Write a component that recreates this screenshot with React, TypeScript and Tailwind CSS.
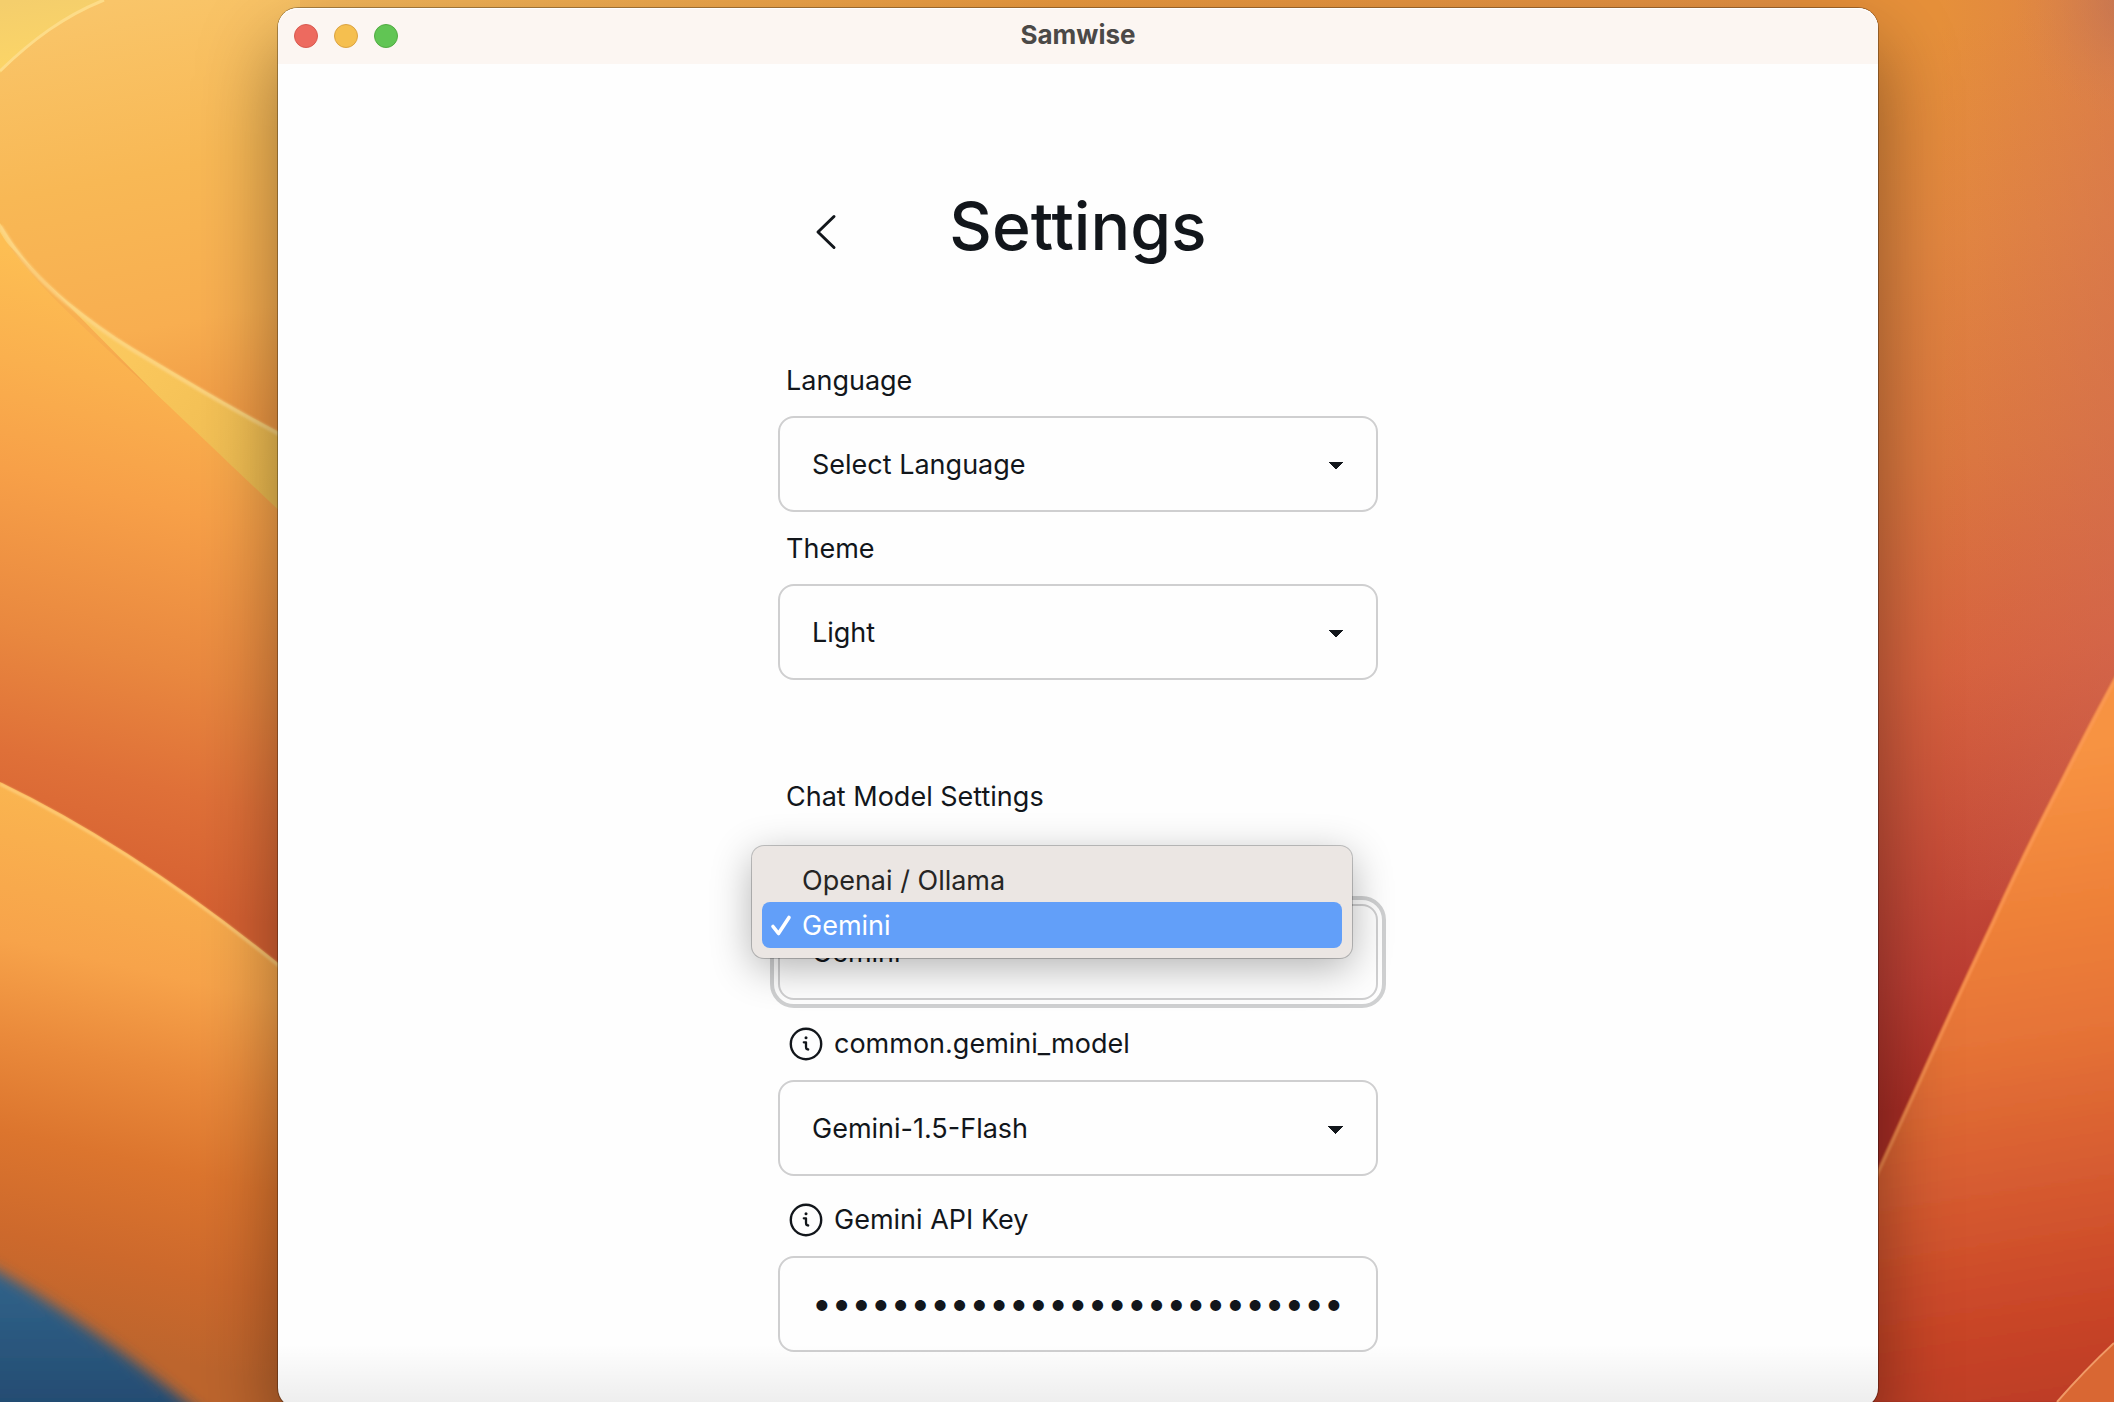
import React from "react";

function Wallpaper() {
  return (
    <svg
      className="absolute inset-0 h-full w-full"
      viewBox="0 0 2114 1402"
      preserveAspectRatio="none"
      aria-hidden="true"
    >
      <defs>
        <linearGradient id="base" gradientUnits="userSpaceOnUse" x1="0" y1="0" x2="2114" y2="0">
          <stop offset="0" stopColor="#f9c468" />
          <stop offset="0.5" stopColor="#e9993f" />
          <stop offset="1" stopColor="#e08c45" />
        </linearGradient>
        <linearGradient id="corner" gradientUnits="userSpaceOnUse" x1="20" y1="0" x2="30" y2="60">
          <stop offset="0" stopColor="#f4ce6c" />
          <stop offset="1" stopColor="#fbd467" />
        </linearGradient>
        <linearGradient id="upper" gradientUnits="userSpaceOnUse" x1="120" y1="0" x2="200" y2="430">
          <stop offset="0" stopColor="#f9c569" />
          <stop offset="0.4" stopColor="#f8b855" />
          <stop offset="0.75" stopColor="#f8ae50" />
          <stop offset="1" stopColor="#ef9944" />
        </linearGradient>
        <linearGradient id="sliver" gradientUnits="userSpaceOnUse" x1="0" y1="230" x2="278" y2="480">
          <stop offset="0" stopColor="#fbcf70" />
          <stop offset="0.5" stopColor="#fac75c" />
          <stop offset="1" stopColor="#eebb50" />
        </linearGradient>
        <linearGradient id="middle" gradientUnits="userSpaceOnUse" x1="100" y1="270" x2="-40" y2="850">
          <stop offset="0" stopColor="#fdbe53" />
          <stop offset="0.18" stopColor="#fab04e" />
          <stop offset="0.36" stopColor="#f7a048" />
          <stop offset="0.62" stopColor="#e9883f" />
          <stop offset="0.82" stopColor="#df7038" />
          <stop offset="1" stopColor="#d66132" />
        </linearGradient>
        <linearGradient id="lower" gradientUnits="userSpaceOnUse" x1="80" y1="800" x2="-50" y2="1370">
          <stop offset="0" stopColor="#fab550" />
          <stop offset="0.26" stopColor="#f7a34a" />
          <stop offset="0.42" stopColor="#ea8a3b" />
          <stop offset="0.58" stopColor="#dc752e" />
          <stop offset="0.75" stopColor="#cd692c" />
          <stop offset="0.9" stopColor="#bd652d" />
        </linearGradient>
        <linearGradient id="blue" gradientUnits="userSpaceOnUse" x1="30" y1="1280" x2="30" y2="1402">
          <stop offset="0" stopColor="#306289" />
          <stop offset="1" stopColor="#244c72" />
        </linearGradient>
        <linearGradient id="right" gradientUnits="userSpaceOnUse" x1="1870" y1="40" x2="2060" y2="1080">
          <stop offset="0" stopColor="#e6903a" />
          <stop offset="0.2" stopColor="#e28640" />
          <stop offset="0.4" stopColor="#dc783f" />
          <stop offset="0.6" stopColor="#d7623e" />
          <stop offset="0.72" stopColor="#cb533a" />
          <stop offset="0.88" stopColor="#bb3e33" />
          <stop offset="1" stopColor="#a92d25" />
        </linearGradient>
        <radialGradient id="haze" gradientUnits="userSpaceOnUse" cx="2134" cy="0" r="120">
          <stop offset="0" stopColor="#a8645f" stopOpacity="0.5" />
          <stop offset="1" stopColor="#cf7f58" stopOpacity="0" />
        </radialGradient>
        <linearGradient id="hazeSide" gradientUnits="userSpaceOnUse" x1="1940" y1="0" x2="2140" y2="0">
          <stop offset="0" stopColor="#cf6a58" stopOpacity="0" />
          <stop offset="1" stopColor="#cf6a58" stopOpacity="0.45" />
        </linearGradient>
        <linearGradient id="rightPetal" gradientUnits="userSpaceOnUse" x1="2010" y1="760" x2="2110" y2="1400">
          <stop offset="0" stopColor="#f79343" />
          <stop offset="0.2" stopColor="#f0843a" />
          <stop offset="0.42" stopColor="#e67437" />
          <stop offset="0.65" stopColor="#d65b30" />
          <stop offset="0.85" stopColor="#c94528" />
          <stop offset="1" stopColor="#bd3d26" />
        </linearGradient>
        <filter id="soft1" x="-10%" y="-10%" width="120%" height="120%">
          <feGaussianBlur stdDeviation="1" />
        </filter>
        <filter id="soft8" x="-20%" y="-20%" width="140%" height="140%">
          <feGaussianBlur stdDeviation="7" />
        </filter>
      </defs>

      <rect width="2114" height="1402" fill="url(#base)" />
      <rect width="500" height="700" fill="url(#upper)" />
      <rect x="300" width="1600" height="20" fill="url(#base)" />
      <path d="M0 0H102C62 16 30 40 0 73Z" fill="url(#corner)" />
      <path d="M104 0C64 16 32 40 0 71" fill="none" stroke="#fddc88" strokeWidth="3" />

      <path d="M0 223C20 258 42 280 67 301C88 318 110 334 133 348C180 376 230 407 300 443V540L0 236Z" fill="url(#sliver)" />
      <path d="M0 232C22 268 54 301 133 373C180 415 230 465 300 530V1000H0Z" fill="url(#middle)" />
      <path d="M0 226C20 260 42 282 67 303C88 320 110 336 133 350C180 378 230 409 300 445" fill="none" stroke="#fdd88b" strokeWidth="4" opacity="0.75" filter="url(#soft1)" />

      <path d="M0 782Q145 852 300 981V1402H0Z" fill="url(#lower)" />
      <path d="M0 784Q145 854 300 983" fill="none" stroke="#ffd182" strokeWidth="3" opacity="0.8" filter="url(#soft1)" />
      <path d="M-40 1250C40 1292 130 1355 215 1425V1450H-40Z" fill="url(#blue)" filter="url(#soft8)" />

      <rect x="1800" width="314" height="1402" fill="url(#right)" />
      <rect x="1900" width="214" height="900" fill="url(#hazeSide)" />
      <rect x="1980" width="134" height="140" fill="url(#haze)" />
      <path d="M2130 650C2110 685 2085 732 2063 776C2037 826 2015 870 1993 919C1965 978 1940 1032 1914 1090C1900 1120 1880 1164 1860 1208V1402H2130Z" fill="url(#rightPetal)" filter="url(#soft1)" />
      <path d="M2130 652C2111 687 2086 734 2064 778C2038 828 2016 872 1994 921C1966 980 1941 1034 1915 1092C1901 1122 1881 1166 1861 1210" fill="none" stroke="#ff9e5c" strokeWidth="3" opacity="0.7" filter="url(#soft1)" />
      <path d="M2114 1343Q2085 1370 2057 1402H2114Z" fill="#d96733" />
      <path d="M2114 1343Q2085 1370 2057 1402" fill="none" stroke="#f09a66" strokeWidth="2" />
    </svg>
  );
}

function InfoIcon() {
  return (
    <svg className="size-8 overflow-visible" viewBox="0 0 32 32" fill="none" stroke="currentColor" aria-hidden="true">
      <circle cx="16" cy="16" r="15.2" strokeWidth="2.4" />
      <circle cx="16" cy="9.8" r="1.5" fill="currentColor" stroke="none" />
      <path d="M13.8 14.300h2.200v4.500c0 2 .6 2.700 2.200 2.700" strokeWidth="2.300" strokeLinejoin="round" strokeLinecap="round" />
    </svg>
  );
}

function FieldLabel({ htmlFor, info = false, children }: { htmlFor: string; info?: boolean; children: React.ReactNode }) {
  return (
    <label htmlFor={htmlFor} className={info ? "mt-2 flex items-center gap-3 px-3 py-4" : "flex items-center px-2 pt-[17px] pb-[15px]"}>
      {info && <InfoIcon />}
      <span>{children}</span>
    </label>
  );
}

const control =
  "block h-24 w-full appearance-none rounded-2xl border-2 border-[#cfcfd0] bg-[#fefefe] px-8 outline-[#cfd0d1]";
const caret =
  "bg-no-repeat bg-[image:linear-gradient(45deg,transparent_50%,currentColor_50%),linear-gradient(135deg,currentColor_50%,transparent_50%)] bg-[position:calc(100%-40px)_calc(50%+2px),calc(100%-32px)_calc(50%+2px)] bg-[size:8px_8px]";

function Select({ id, value, open = false, label }: { id: string; value: string; open?: boolean; label?: string }) {
  return (
    <select
      id={id}
      aria-label={label}
      defaultValue={value}
      className={`${control} ${caret} pt-0.5 text-[27px] ${open ? "outline-4 outline-offset-4" : ""}`}
    >
      <option>{value}</option>
    </select>
  );
}

function ModelMenu() {
  return (
    <ul
      role="listbox"
      aria-label="Chat model"
      className="absolute -top-[58px] right-[26px] -left-[26px] rounded-xl bg-[#ebe6e3] p-[10px] leading-[46px] text-[#262524] shadow-[0_0_0_1px_rgba(0,0,0,0.22),0_10px_40px_rgba(0,0,0,0.3)]"
    >
      <li role="option" aria-selected="false" className="h-[46px] pt-0.5 pl-10">
        Openai / Ollama
      </li>
      <li role="option" aria-selected="true" className="flex h-[46px] items-center rounded-lg bg-[#629ff9] text-white">
        <span className="flex w-10 pl-2">
          <svg className="size-6" viewBox="0 0 24 24" fill="none" stroke="currentColor" strokeWidth="3.6" strokeLinecap="round" strokeLinejoin="round" aria-hidden="true">
            <path d="M3 13.500L8.500 20.500L19 4.500" />
          </svg>
        </span>
        <span className="pt-0.5">Gemini</span>
      </li>
    </ul>
  );
}

export default function App() {
  return (
    <div className="relative h-screen overflow-hidden pt-2 pr-[236px] pl-[278px] font-['Inter',sans-serif] text-[27px] leading-10 text-[#12161b]">
      <Wallpaper />
      <div className="relative flex h-[calc(100%+6px)] flex-col rounded-[20px] bg-[#fefefe] shadow-[0_0_0_1px_rgba(0,0,0,0.3),0_36px_80px_rgba(0,0,0,0.4)]">
        <header className="grid h-14 shrink-0 grid-cols-3 items-center rounded-t-[20px] bg-[#fcf6f2] px-4 shadow-[inset_0_1px_0_#ffffff]">
          <div className="flex gap-4">
            <button aria-label="Close" className="size-6 rounded-full border border-[#d85a50] bg-[#ed6a5f]" />
            <button aria-label="Minimize" className="size-6 rounded-full border border-[#dba342] bg-[#f5bf4f]" />
            <button aria-label="Zoom" className="size-6 rounded-full border border-[#51ab42] bg-[#61c554]" />
          </div>
          <h2 className="pb-0.5 text-center text-[26px] font-bold text-[#4b4947]">Samwise</h2>
        </header>

        <main className="mx-auto w-full max-w-[600px] pt-[122px]">
          <div className="grid grid-cols-[96px_1fr_96px] items-center">
            <button aria-label="Back" className="flex h-20 items-center justify-center pt-3">
              <svg className="h-10 w-6" viewBox="0 0 24 40" fill="none" stroke="currentColor" strokeWidth="3" strokeLinecap="round" strokeLinejoin="round" aria-hidden="true">
                <path d="M20 4.500L4 20L20 35.500" />
              </svg>
            </button>
            <h1 className="text-center text-[66px] leading-20 font-medium">Settings</h1>
          </div>

          <section className="pt-[78px]">
            <FieldLabel htmlFor="language">Language</FieldLabel>
            <Select id="language" value="Select Language" />
            <FieldLabel htmlFor="theme">Theme</FieldLabel>
            <Select id="theme" value="Light" />
          </section>

          <section className="pt-20">
            <h2 className="px-2 pt-[17px] pb-[15px]">Chat Model Settings</h2>
            <div className="relative mt-[72px]">
              <Select id="provider" value="Gemini" open label="Chat model" />
              <ModelMenu />
            </div>
            <FieldLabel htmlFor="model" info>common.gemini_model</FieldLabel>
            <Select id="model" value="Gemini-1.5-Flash" />
            <FieldLabel htmlFor="key" info>Gemini API Key</FieldLabel>
            <input id="key" type="password" defaultValue="AIzaSyExampleKey00000000000" className={`${control} pb-0.5 text-[35px]`} />
          </section>
        </main>
        <div className="pointer-events-none absolute inset-x-0 bottom-0 h-16 rounded-b-[20px] bg-linear-to-b from-transparent to-black/7" />
      </div>
    </div>
  );
}
